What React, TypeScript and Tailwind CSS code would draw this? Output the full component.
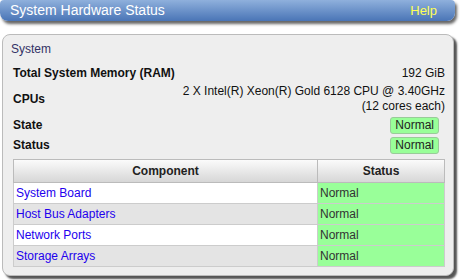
const rows = [
  { name: "System Board", status: "Normal" },
  { name: "Host Bus Adapters", status: "Normal" },
  { name: "Network Ports", status: "Normal" },
  { name: "Storage Arrays", status: "Normal" },
];

function Badge({ children }: { children: string }) {
  return (
    <span className="mr-[6px] inline-flex h-[17px] items-center rounded-[3px] border border-[#99cc99] bg-[#99ff99] px-[4px] leading-none text-[#222]">
      {children}
    </span>
  );
}

export default function App() {
  return (
    <div
      className="h-[280px] w-[460px] overflow-hidden bg-white text-[12px] text-[#111]"
      style={{ fontFamily: '"Liberation Sans", Arial, sans-serif' }}
    >
      {/* title bar */}
      <div className="flex h-[21px] w-[455px] items-center justify-between rounded-b-[8px] rounded-t-[4px] bg-gradient-to-b from-[#8fb0dc] to-[#4a75b6] pl-[10px] pr-[18px] shadow-[2px_3px_3px_#666]">
        <span className="text-[14px] text-white">System Hardware Status</span>
        <span className="text-[13px] text-[#ffff55]">Help</span>
      </div>

      {/* panel */}
      <div className="ml-[2px] mt-[13px] w-[452px] rounded-[8px] border border-[#bbb] bg-[#eeeeee] pb-[8px] pl-[10px] pr-[8px] shadow-[3px_3px_2px_#555]">
        <div className="-ml-[2px] h-[28px] pt-[7px] leading-[15px] text-[#333366]">System</div>

        <div className="flex h-[19px] items-center justify-between">
          <span className="font-bold">Total System Memory (RAM)</span>
          <span>192 GiB</span>
        </div>

        <div className="flex h-[33px] items-center justify-between">
          <span className="font-bold">CPUs</span>
          <span className="text-right leading-[15px]">
            2 X Intel(R) Xeon(R) Gold 6128 CPU @ 3.40GHz
            <br />
            (12 cores each)
          </span>
        </div>

        <div className="flex h-[20px] items-center justify-between">
          <span className="font-bold">State</span>
          <Badge>Normal</Badge>
        </div>

        <div className="flex h-[20px] items-center justify-between">
          <span className="font-bold">Status</span>
          <Badge>Normal</Badge>
        </div>

        <table className="mt-[4px] w-[432px] border-collapse border border-[#bbb]">
          <thead>
            <tr className="h-[23px] bg-gradient-to-b from-[#fbfbfb] to-[#d5d5d5]">
              <th className="border border-[#bbb] font-bold text-[#222]">Component</th>
              <th className="w-[127px] border border-[#bbb] font-bold text-[#222]">Status</th>
            </tr>
          </thead>
          <tbody>
            {rows.map((r, i) => (
              <tr key={r.name} className={`h-[21px] ${i % 2 ? "bg-[#e4e4e4]" : "bg-white"}`}>
                <td className="border border-[#ccc] pl-[2px] text-[#2200ee]">{r.name}</td>
                <td className="border border-[#ccc] bg-[#99ff99] pl-[2px] text-[#333]">{r.status}</td>
              </tr>
            ))}
          </tbody>
        </table>
      </div>
    </div>
  );
}
